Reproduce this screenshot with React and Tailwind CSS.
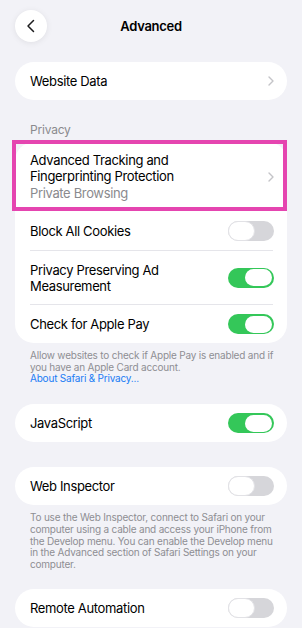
import React from "react";

function Chevron() {
  return (
    <svg width="6" height="10" viewBox="0 0 6 10" fill="none">
      <path d="M1 1l4 4-4 4" stroke="#c4c4c8" strokeWidth="1.4" strokeLinecap="round" strokeLinejoin="round" />
    </svg>
  );
}

function Toggle({ on }) {
  return on ? (
    <div className="w-[46px] h-[20px] rounded-full bg-[#34c759] flex items-center justify-end pr-[2px]">
      <div className="w-[27px] h-[17px] rounded-full bg-white" />
    </div>
  ) : (
    <div className="w-[46px] h-[20px] rounded-full bg-[#d6d6da] flex items-center">
      <div className="w-[27px] h-[20px] rounded-full bg-white border-[1.5px] border-[#e2e2e6]" />
    </div>
  );
}

function Row({ label, children, h = "h-[38px]" }) {
  return (
    <div className={`flex items-center justify-between pl-[15px] pr-[13px] ${h}`}>
      <div className="text-[13px] leading-[16px] tracking-[-0.35px] text-black">{label}</div>
      {children}
    </div>
  );
}

function Divider() {
  return <div className="h-px bg-[#e5e5ea] ml-[15px] mr-[14px]" />;
}

export default function App() {
  return (
    <div
      className="w-[302px] h-[628px] bg-[#f2f2f7] overflow-hidden"
      style={{ fontFamily: "Inter, 'Noto Sans', sans-serif" }}
    >
      {/* Header */}
      <div className="grid grid-cols-[32px_1fr_32px] items-center px-[15px] pt-[9px] h-[42px]">
        <div className="w-[32px] h-[32px] rounded-full bg-white shadow-[0_1px_6px_rgba(0,0,0,0.08)] flex items-center justify-center">
          <svg width="10" height="14" viewBox="0 0 10 14" fill="none">
            <path d="M7.5 1.5L2 7l5.5 5.5" stroke="#1c1c1e" strokeWidth="1.5" strokeLinecap="round" strokeLinejoin="round" />
          </svg>
        </div>
        <div className="text-center text-[13px] font-semibold text-black tracking-[-0.3px] pt-[2px]">Advanced</div>
        <div />
      </div>

      {/* Website Data */}
      <div className="mx-[15px] mt-[20px] bg-white rounded-[19px]">
        <Row label="Website Data">
          <Chevron />
        </Row>
      </div>

      {/* Privacy */}
      <div className="mt-[23px] pl-[30px] text-[12px] leading-[14px] tracking-[-0.2px] text-[#8a8a8e]">Privacy</div>

      <div className="mx-[15px] mt-[5px] bg-white rounded-[19px]">
        <div className="relative h-[70px] flex items-center justify-between pl-[15px] pr-[13px]">
          <div className="tracking-[-0.35px]">
            <div className="text-[13px] leading-[16px] text-black">Advanced Tracking and</div>
            <div className="text-[13px] leading-[16px] text-black">Fingerprinting Protection</div>
            <div className="text-[13px] leading-[17px] text-[#8a8a8e] mt-[1px]">Private Browsing</div>
          </div>
          <Chevron />
          <div className="absolute left-[-3px] right-0 top-[-2px] bottom-[1px] border-[4px] border-[#e545b0]" />
        </div>
        <Row label="Block All Cookies">
          <Toggle on={false} />
        </Row>
        <Divider />
        <Row label={<>Privacy Preserving Ad<br />Measurement</>} h="h-[53px]">
          <Toggle on />
        </Row>
        <Divider />
        <Row label="Check for Apple Pay">
          <Toggle on />
        </Row>
      </div>

      <div className="mt-[7px] pl-[30px] text-[10px] leading-[11.7px] tracking-[-0.2px] text-[#8e8e93] whitespace-nowrap">
        <div>Allow websites to check if Apple Pay is enabled and if</div>
        <div>you have an Apple Card account.</div>
        <div className="text-[#1a7cf5]">About Safari &amp; Privacy...</div>
      </div>

      {/* JavaScript */}
      <div className="mx-[15px] mt-[19px] bg-white rounded-[19px]">
        <Row label="JavaScript">
          <Toggle on />
        </Row>
      </div>

      {/* Web Inspector */}
      <div className="mx-[15px] mt-[25px] bg-white rounded-[19px]">
        <Row label="Web Inspector">
          <Toggle on={false} />
        </Row>
      </div>
      <div className="mt-[7px] pl-[30px] text-[10px] leading-[11.75px] tracking-[-0.2px] text-[#8e8e93] whitespace-nowrap">
        <div>To use the Web Inspector, connect to Safari on your</div>
        <div>computer using a cable and access your iPhone from</div>
        <div>the Develop menu. You can enable the Develop menu</div>
        <div>in the Advanced section of Safari Settings on your</div>
        <div>computer.</div>
      </div>

      {/* Remote Automation */}
      <div className="mx-[15px] mt-[18px] bg-white rounded-[19px]">
        <Row label="Remote Automation">
          <Toggle on={false} />
        </Row>
      </div>
    </div>
  );
}
